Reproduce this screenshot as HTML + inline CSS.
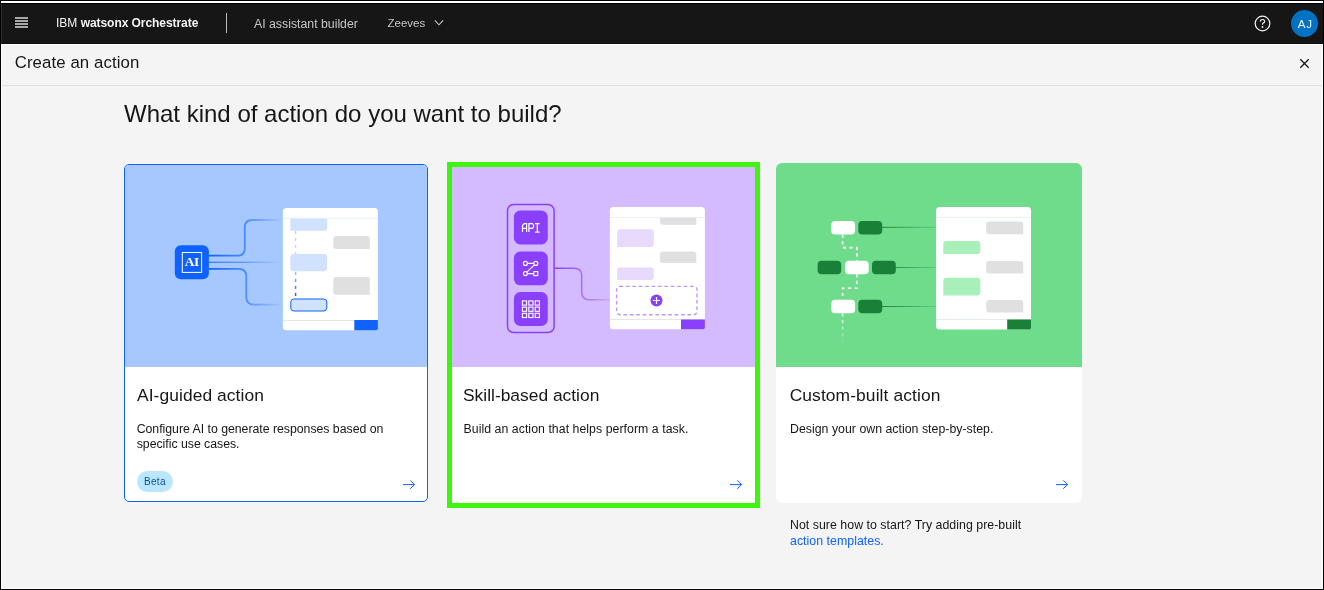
<!DOCTYPE html>
<html><head><meta charset="utf-8">
<style>
html,body{margin:0;padding:0;}
body{will-change:transform;width:1324px;height:590px;position:relative;overflow:hidden;background:#000;font-family:"Liberation Sans",sans-serif;color:#161616;}
.a{position:absolute;}
.t{position:absolute;white-space:nowrap;line-height:1;}
</style></head><body>
<!-- frame -->
<div class="a" style="left:1px;top:1px;width:1322px;height:588px;background:#fff"></div>
<div class="a" style="left:1px;top:3px;width:1322px;height:1px;background:#000"></div>
<div class="a" style="left:2px;top:45px;width:1320px;height:543px;background:#f4f4f4"></div>
<!-- header -->
<div class="a" style="left:1px;top:4px;width:1322px;height:40px;background:#161616"></div>
<div class="a" style="left:1px;top:4px;width:1px;height:40px;background:#2e2e2e"></div>
<div class="a" style="left:1px;top:43px;width:1322px;height:1px;background:#0e0e0e"></div>
<div class="a" style="left:1323px;top:4px;width:1px;height:40px;background:#000"></div>

<!-- hamburger -->
<div class="a" style="left:15px;top:17px;width:13px;height:2px;background:#a8a8a8"></div>
<div class="a" style="left:15px;top:20px;width:13px;height:2px;background:#a8a8a8"></div>
<div class="a" style="left:15px;top:23px;width:13px;height:2px;background:#a8a8a8"></div>
<div class="a" style="left:15px;top:26px;width:13px;height:2px;background:#a8a8a8"></div>

<div class="t" style="left:56px;top:16.8px;font-size:12px;color:#f4f4f4">IBM <b style="letter-spacing:-0.06px">watsonx Orchestrate</b></div>
<div class="a" style="left:226px;top:13px;width:1px;height:20px;background:#bdbdbd"></div>
<div class="t" style="left:254px;top:17.5px;font-size:12.3px;color:#c6c6c6">AI assistant builder</div>
<div class="t" style="left:387.5px;top:17.9px;font-size:11.5px;color:#c6c6c6">Zeeves</div>
<svg class="a" style="left:430px;top:16px" width="18" height="14" viewBox="0 0 18 14">
  <path d="M4.8 4.3 L9 8.8 L13.2 4.3" fill="none" stroke="#c6c6c6" stroke-width="1.1"/>
</svg>

<!-- help -->
<svg class="a" style="left:1252px;top:13px" width="21" height="21" viewBox="0 0 21 21">
  <circle cx="10.5" cy="10.5" r="7.3" fill="none" stroke="#f4f4f4" stroke-width="1.2"/>
  <path d="M8.3 8.6 C8.3 7.2 9.3 6.5 10.5 6.5 C11.7 6.5 12.6 7.3 12.6 8.4 C12.6 9.5 11.6 9.9 11 10.3 C10.6 10.6 10.5 10.9 10.5 11.8" fill="none" stroke="#f4f4f4" stroke-width="1.2"/>
  <circle cx="10.5" cy="14" r="0.9" fill="#f4f4f4"/>
</svg>
<!-- avatar -->
<div class="a" style="left:1290.6px;top:9.7px;width:27.6px;height:27.6px;border-radius:50%;background:#0072c3"></div>
<div class="t" style="left:1297.7px;top:18.6px;font-size:11.5px;letter-spacing:1px;color:#f4f4f4">AJ</div>

<!-- create bar -->
<div class="t" style="left:14.7px;top:54.7px;font-size:16.8px;letter-spacing:0.1px;color:#161616">Create an action</div>
<div class="a" style="left:2px;top:85px;width:1320px;height:1px;background:#e0e0e0"></div>
<svg class="a" style="left:1296px;top:55px" width="17" height="17" viewBox="0 0 17 17">
  <path d="M4.3 4.3 L12.7 12.7 M12.7 4.3 L4.3 12.7" stroke="#161616" stroke-width="1.3"/>
</svg>

<div class="t" style="left:124px;top:102.4px;font-size:24px;color:#161616">What kind of action do you want to build?</div>

<!-- card 1 -->
<div class="a" style="left:124px;top:164px;width:302px;height:336px;border:1px solid #0f62fe;border-radius:5px;background:#fff;overflow:hidden">
  <div class="a" style="left:0;top:0;width:302px;height:202px;background:#a6c8ff"></div>
</div>
<!-- card 2 -->
<div class="a" style="left:447px;top:162px;width:303px;height:336px;border:5px solid #3cf60c;background:#fff">
  <div class="a" style="left:0;top:0;width:303px;height:200px;background:#d4bbff"></div>
</div>
<!-- card 3 -->
<div class="a" style="left:776px;top:163px;width:306px;height:340px;border-radius:6px;background:#fff;overflow:hidden">
  <div class="a" style="left:0;top:0;width:306px;height:204px;background:#6fdc8c"></div>
</div>

<!-- card texts -->
<div class="t" style="left:137px;top:386.8px;font-size:17.4px;letter-spacing:0.08px">AI-guided action</div>
<div class="t" style="left:136.7px;top:421.6px;font-size:12.3px;line-height:15.2px;letter-spacing:-0.02px">Configure AI to generate responses based on<br>specific use cases.</div>
<div class="t" style="left:463px;top:386.8px;font-size:17.4px">Skill-based action</div>
<div class="t" style="left:463.5px;top:421.6px;font-size:12.3px;line-height:15.2px;letter-spacing:0.05px">Build an action that helps perform a task.</div>
<div class="t" style="left:789.7px;top:386.8px;font-size:17.4px;letter-spacing:0.1px">Custom-built action</div>
<div class="t" style="left:790px;top:421.6px;font-size:12.3px;line-height:15.2px;letter-spacing:0.03px">Design your own action step-by-step.</div>

<!-- beta -->
<div class="a" style="left:137px;top:471px;width:36px;height:21px;border-radius:11px;background:#bae6ff"></div>
<div class="t" style="left:144px;top:477px;font-size:10px;letter-spacing:0.3px;color:#00539a">Beta</div>

<!-- arrows -->
<svg class="a" style="left:400px;top:477px" width="18" height="16" viewBox="0 0 18 16">
  <path d="M3 7.6 H14.5 M10.3 3.4 L14.5 7.6 L10.3 11.8" fill="none" stroke="#0f62fe" stroke-width="1"/>
</svg>
<svg class="a" style="left:727px;top:477px" width="18" height="16" viewBox="0 0 18 16">
  <path d="M3 7.6 H14.5 M10.3 3.4 L14.5 7.6 L10.3 11.8" fill="none" stroke="#0f62fe" stroke-width="1"/>
</svg>
<svg class="a" style="left:1053px;top:477px" width="18" height="16" viewBox="0 0 18 16">
  <path d="M3 7.6 H14.5 M10.3 3.4 L14.5 7.6 L10.3 11.8" fill="none" stroke="#0f62fe" stroke-width="1"/>
</svg>

<!-- footer -->
<div class="t" style="left:790px;top:518.1px;font-size:12.35px;line-height:15.6px;letter-spacing:0.03px">Not sure how to start? Try adding pre-built<br><span style="color:#0f62fe">action templates.</span></div>

<!-- illustrations -->
<svg class="a" style="left:0;top:0" width="1324" height="590" viewBox="0 0 1324 590">
<defs>
  <linearGradient id="g1" gradientUnits="userSpaceOnUse" x1="209" y1="0" x2="283" y2="0">
    <stop offset="0" stop-color="#0f62fe"/><stop offset="0.45" stop-color="#4589ff"/><stop offset="1" stop-color="#a6c8ff"/>
  </linearGradient>
  <linearGradient id="g2" gradientUnits="userSpaceOnUse" x1="554" y1="0" x2="610" y2="0">
    <stop offset="0" stop-color="#8a3ffc"/><stop offset="0.5" stop-color="#a56eff"/><stop offset="1" stop-color="#c9abff"/>
  </linearGradient>
  <linearGradient id="g3" gradientUnits="userSpaceOnUse" x1="882" y1="0" x2="936" y2="0">
    <stop offset="0" stop-color="#198038"/><stop offset="1" stop-color="#5ccb7b"/>
  </linearGradient>
  <linearGradient id="g1d" gradientUnits="userSpaceOnUse" x1="0" y1="271" x2="0" y2="297"><stop offset="0" stop-color="#a6c8ff"/><stop offset="1" stop-color="#0f62fe"/></linearGradient>
  <linearGradient id="g3b" gradientUnits="userSpaceOnUse" x1="0" y1="313" x2="0" y2="344">
    <stop offset="0" stop-color="#fff"/><stop offset="1" stop-color="#fff" stop-opacity="0"/>
  </linearGradient>
</defs>
<!-- ===== card 1 ===== -->
<path d="M209 255.7 H237.3 Q244.8 255.7 244.8 248.2 V227.5 Q244.8 220 252.3 220 H283" fill="none" stroke="url(#g1)" stroke-width="1.8"/>
<path d="M209 262.3 H283" fill="none" stroke="url(#g1)" stroke-width="1.1"/>
<path d="M209 268.9 H238.8 Q246.3 268.9 246.3 276.4 V297.1 Q246.3 304.6 253.8 304.6 H283" fill="none" stroke="url(#g1)" stroke-width="1.8"/>
<rect x="174.8" y="245.3" width="34.1" height="33.9" rx="6" fill="#0f62fe"/>
<rect x="182.3" y="252.5" width="19.3" height="19.9" fill="none" stroke="#fff" stroke-width="1"/>
<text x="191.8" y="266.1" font-family="Liberation Serif" font-weight="bold" font-size="13.3" fill="#fff" text-anchor="middle" letter-spacing="-0.3">AI</text>
<rect x="282.9" y="207.9" width="95" height="122.4" rx="3.5" fill="#fff"/>
<rect x="282.9" y="217.8" width="95" height="0.8" fill="#e3edff"/>
<path d="M290.3 218.6 H327.2 V227.8 Q327.2 230.8 324.2 230.8 H290.3 Z" fill="#d0e2ff"/>
<rect x="290.3" y="254" width="36.9" height="17.3" rx="3" fill="#d0e2ff"/>
<rect x="290.8" y="299" width="36" height="12" rx="3" fill="#d0e2ff" stroke="#0f62fe" stroke-width="1"/>
<path d="M336.3 236.1 H366.8 Q369.8 236.1 369.8 239.1 V248.9 H336.3 Q333.3 248.9 333.3 245.9 V239.1 Q333.3 236.1 336.3 236.1 Z" fill="#e0e0e0"/>
<path d="M336.3 276.9 H366.8 Q369.8 276.9 369.8 279.9 V294.8 H336.3 Q333.3 294.8 333.3 291.8 V279.9 Q333.3 276.9 336.3 276.9 Z" fill="#e0e0e0"/>
<path d="M295.6 231 V254" stroke="#b4d0ff" stroke-width="1.3" stroke-dasharray="2.7 4.3"/>
<path d="M295.6 271.7 V298.5" stroke="url(#g1d)" stroke-width="1.5" stroke-dasharray="3.4 3.6"/>
<rect x="282.9" y="320" width="95" height="0.8" fill="#e0e0e0"/>
<path d="M354.3 320.1 H377.9 V328.3 Q377.9 330.3 375.9 330.3 H354.3 Z" fill="#0f62fe"/>
<!-- ===== card 2 ===== -->
<rect x="507.5" y="204.5" width="46.6" height="127.9" rx="6" fill="none" stroke="#8a3ffc" stroke-width="1.5"/>
<path d="M554.2 268.2 H574.2 Q581.7 268.2 581.7 275.7 V292.2 Q581.7 299.7 589.2 299.7 H610" fill="none" stroke="url(#g2)" stroke-width="1.5"/>
<rect x="513.9" y="210.6" width="33.9" height="33.8" rx="6.5" fill="#8a3ffc"/>
<rect x="513.9" y="251.5" width="33.9" height="33.8" rx="6.5" fill="#8a3ffc"/>
<rect x="513.9" y="292.1" width="33.9" height="33.8" rx="6.5" fill="#8a3ffc"/>
<g fill="none" stroke="#fff" stroke-width="1.2">
  <path d="M522.5 232.1 V225.4 L524.2 223.6 H526.6 V232.1 M522.5 228.3 H526.6"/>
  <path d="M528.9 232.1 V223.6 H532.4 L533.5 224.7 V227.2 L532.4 228.3 H528.9"/>
  <path d="M535 223.6 H539.6 M537.3 223.6 V232.1 M535 232.1 H539.6"/>
</g>
<g fill="none" stroke="#fff" stroke-width="1.1">
  <circle cx="525.4" cy="263.4" r="2"/>
  <circle cx="535.8" cy="263.4" r="2"/>
  <circle cx="525.4" cy="273.6" r="2"/>
  <rect x="533.8" y="271.6" width="4" height="4"/>
  <path d="M527.4 263.4 H533.8 M534.4 264.9 L526.8 272.1 M527.4 273.6 H533.8"/>
</g>
<g fill="none" stroke="#fff" stroke-width="1.1">
  <rect x="522.4" y="300.9" width="4.2" height="4.2"/>
  <rect x="528.8" y="300.9" width="4.2" height="4.2"/>
  <rect x="535.2" y="300.9" width="4.2" height="4.2"/>
  <rect x="522.4" y="307.1" width="4.2" height="4.2"/>
  <rect x="528.8" y="307.1" width="4.2" height="4.2"/>
  <rect x="535.2" y="307.1" width="4.2" height="4.2"/>
  <rect x="522.4" y="313.3" width="4.2" height="4.2"/>
  <rect x="528.8" y="313.3" width="4.2" height="4.2"/>
  <rect x="535.2" y="313.3" width="4.2" height="4.2"/>
</g>
<rect x="609.9" y="207" width="95" height="122.3" rx="3.5" fill="#fff"/>
<rect x="609.9" y="216.9" width="95" height="0.8" fill="#efe6ff"/>
<path d="M660 217.7 H696.3 V224.7 H663 Q660 224.7 660 221.7 Z" fill="#e0e0e0"/>
<path d="M620.2 229.3 H650.8 Q653.8 229.3 653.8 232.3 V243.9 Q653.8 246.9 650.8 246.9 H617.2 V232.3 Q617.2 229.3 620.2 229.3 Z" fill="#e8daff"/>
<path d="M663 251.5 H693.3 Q696.3 251.5 696.3 254.5 V263.1 H663 Q660 263.1 660 260.1 V254.5 Q660 251.5 663 251.5 Z" fill="#e0e0e0"/>
<path d="M620.2 267.6 H650.8 Q653.8 267.6 653.8 270.6 V277.1 Q653.8 280.1 650.8 280.1 H617.2 V270.6 Q617.2 267.6 620.2 267.6 Z" fill="#e8daff"/>
<rect x="616.6" y="286.4" width="80.4" height="28.3" rx="3" fill="none" stroke="#be95ff" stroke-width="1.4" stroke-dasharray="3.6 2.8"/>
<circle cx="656.5" cy="300.5" r="6" fill="#8a3ffc"/>
<path d="M652.9 300.5 H660.1 M656.5 296.9 V304.1" stroke="#fff" stroke-width="1.2"/>
<rect x="609.9" y="319.2" width="95" height="0.8" fill="#e0e0e0"/>
<path d="M681 319.6 H704.9 V327.3 Q704.9 329.3 702.9 329.3 H681 Z" fill="#8a3ffc"/>
<!-- ===== card 3 ===== -->
<path d="M882 227.3 H936 M895.8 267.5 H936 M882 306.5 H936" stroke="url(#g3)" stroke-width="0.95"/>
<g fill="none" stroke="#fff" stroke-width="1.6" stroke-dasharray="3.2 3.4">
  <path d="M842.6 234.6 V247.6 H856.9 V260.8"/>
  <path d="M856.9 274.2 V288.3 H842.6 V299.8"/>
</g>
<path d="M842.6 313.4 V344" fill="none" stroke="url(#g3b)" stroke-width="1.6" stroke-dasharray="3.2 3.4"/>
<rect x="831.2" y="221" width="23.9" height="13.5" rx="4" fill="#fff"/>
<rect x="858.3" y="221" width="23.9" height="13.5" rx="4" fill="#198038"/>
<rect x="817.6" y="260.8" width="23.6" height="13.4" rx="4" fill="#198038"/>
<rect x="845.1" y="260.8" width="23.6" height="13.4" rx="4" fill="#fff"/>
<rect x="872" y="260.8" width="23.8" height="13.4" rx="4" fill="#198038"/>
<rect x="831.2" y="299.8" width="23.9" height="13.5" rx="4" fill="#fff"/>
<rect x="858.3" y="299.8" width="23.9" height="13.5" rx="4" fill="#198038"/>
<rect x="936.1" y="207.1" width="94.9" height="122.5" rx="3.5" fill="#fff"/>
<rect x="936.1" y="216.9" width="94.9" height="0.8" fill="#d6f5de"/>
<path d="M989.2 221.6 H1020.3 Q1023.3 221.6 1023.3 224.6 V234.2 H989.2 Q986.2 234.2 986.2 231.2 V224.6 Q986.2 221.6 989.2 221.6 Z" fill="#e0e0e0"/>
<path d="M989.2 260.9 H1020.3 Q1023.3 260.9 1023.3 263.9 V273.4 H989.2 Q986.2 273.4 986.2 270.4 V263.9 Q986.2 260.9 989.2 260.9 Z" fill="#e0e0e0"/>
<path d="M989.2 299.9 H1020.3 Q1023.3 299.9 1023.3 302.9 V312.4 H989.2 Q986.2 312.4 986.2 309.4 V302.9 Q986.2 299.9 989.2 299.9 Z" fill="#e0e0e0"/>
<path d="M946.3 241 H977.3 Q980.3 241 980.3 244 V251 Q980.3 254 977.3 254 H943.3 V244 Q943.3 241 946.3 241 Z" fill="#a7f0ba"/>
<path d="M946.3 277.8 H977.3 Q980.3 277.8 980.3 280.8 V292.5 Q980.3 295.5 977.3 295.5 H943.3 V280.8 Q943.3 277.8 946.3 277.8 Z" fill="#a7f0ba"/>
<rect x="936.1" y="319.1" width="94.9" height="0.8" fill="#dce9df"/>
<path d="M1007.2 319.4 H1031 V327.6 Q1031 329.6 1029 329.6 H1007.2 Z" fill="#198038"/>
</svg>
</body></html>
